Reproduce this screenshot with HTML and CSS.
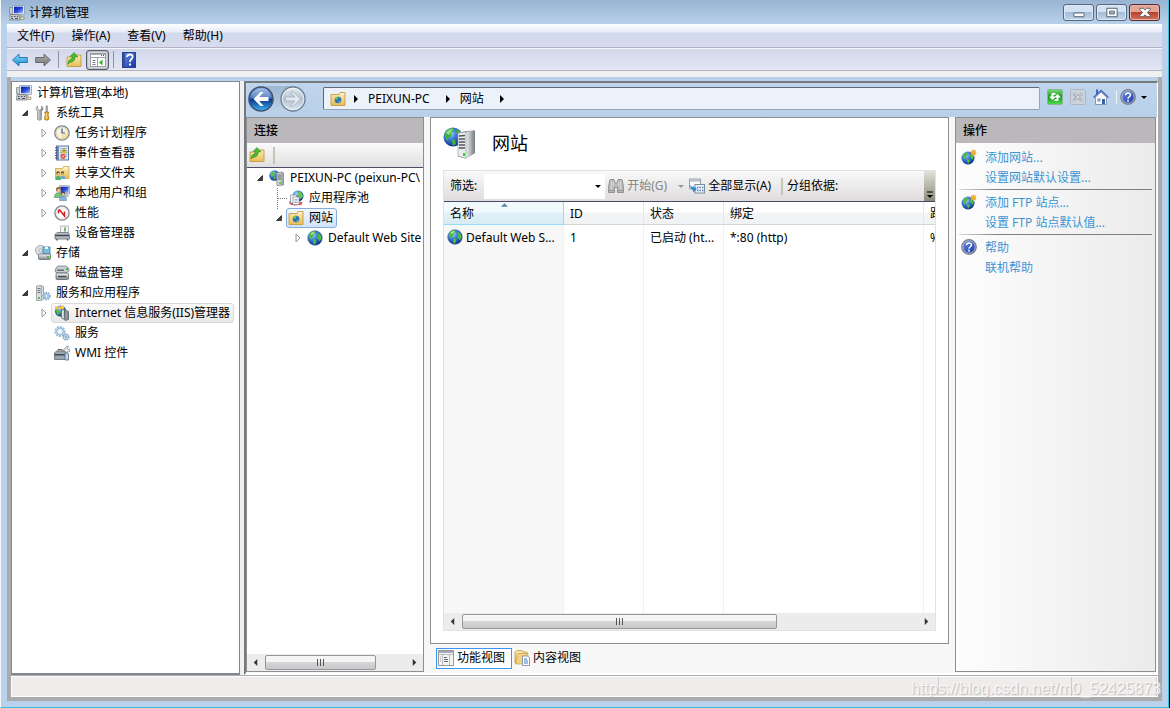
FILE: index.html
```html
<!DOCTYPE html>
<html lang="zh-CN">
<head>
<meta charset="utf-8">
<title>计算机管理</title>
<link rel="stylesheet" href="styles.css">
</head>
<body>
<svg class="sprite" aria-hidden="true">
  <defs>
    <radialGradient id="gGlobe" cx=".35" cy=".3" r=".75"><stop offset="0" stop-color="#b9dcff"/><stop offset=".4" stop-color="#3f7fe0"/><stop offset="1" stop-color="#0a2a86"/></radialGradient>
    <linearGradient id="gFolder" x1="0" y1="0" x2="0" y2="1"><stop offset="0" stop-color="#fdeeb0"/><stop offset="1" stop-color="#e6bd59"/></linearGradient>
    <linearGradient id="gMetal" x1="0" y1="0" x2="0" y2="1"><stop offset="0" stop-color="#f4f5f6"/><stop offset="1" stop-color="#80868c"/></linearGradient>
    <linearGradient id="gMetalH" x1="0" y1="0" x2="1" y2="0"><stop offset="0" stop-color="#f0f2f3"/><stop offset="1" stop-color="#727a80"/></linearGradient>
    <linearGradient id="gScreen" x1="0" y1="0" x2="1" y2="1"><stop offset="0" stop-color="#0a1b9a"/><stop offset=".5" stop-color="#2448d8"/><stop offset="1" stop-color="#a8c4ff"/></linearGradient>
    <linearGradient id="gBack" x1="0" y1="0" x2="0" y2="1"><stop offset="0" stop-color="#8fb2e4"/><stop offset=".48" stop-color="#2e62b4"/><stop offset=".5" stop-color="#0a2f86"/><stop offset="1" stop-color="#38b6f6"/></linearGradient>
    <linearGradient id="gFwd" x1="0" y1="0" x2="0" y2="1"><stop offset="0" stop-color="#e6edf5"/><stop offset=".5" stop-color="#b4c2d2"/><stop offset="1" stop-color="#dde7f1"/></linearGradient>
    <linearGradient id="gArrow" x1="0" y1="0" x2="0" y2="1"><stop offset="0" stop-color="#8fdcfb"/><stop offset="1" stop-color="#1587d0"/></linearGradient>
    <linearGradient id="gArrowG" x1="0" y1="0" x2="0" y2="1"><stop offset="0" stop-color="#b0b0b0"/><stop offset="1" stop-color="#757575"/></linearGradient>
    <linearGradient id="gGreen" x1="0" y1="0" x2="0" y2="1"><stop offset="0" stop-color="#7fd97a"/><stop offset=".5" stop-color="#159a1c"/><stop offset="1" stop-color="#4fe04a"/></linearGradient>
    <linearGradient id="gHelp" x1="0" y1="0" x2="1" y2="1"><stop offset="0" stop-color="#6f93ea"/><stop offset="1" stop-color="#12309c"/></linearGradient>
  </defs>
  <symbol id="globe" viewBox="0 0 16 16"><circle cx="8" cy="8" r="7.3" fill="url(#gGlobe)" stroke="#4a6a9e" stroke-width=".6"/><path d="M2 5Q4 1 7.600 1.100L8.500 3 6.500 4.500 7 6 5 7.500 5.500 9 4 9.500 2 8zM6.500 9.200L9.500 10 9 13 7.200 14.700 5.800 12zM10.500 2.500L13.500 4.800 14.800 8.500 12.500 11.500 11 9 10 7.500 11.200 5.200z" fill="#4cbb45"/><path d="M3.500 3.800Q6 1.500 7.500 2L6.500 3.500 5 5z" fill="#b5f29c"/></symbol>
  <symbol id="computer" viewBox="0 0 16 16"><path d="M.5 2.500h3V9h-3z" fill="#c9ced2" stroke="#84898e" stroke-width=".8"/><rect x="3.500" y=".5" width="12" height="9" rx=".6" fill="#dfe5ee" stroke="#8d99ad" stroke-width=".8"/><rect x="5" y="1.700" width="9" height="6.500" fill="url(#gScreen)"/><path d="M8 9.500h4l1 2H7z" fill="#a9b1b9"/><path d="M1.500 9.500h8l1.500 4v1.500H0V12z" fill="#c3c8cd" stroke="#6d747b" stroke-width=".7"/><path d="M2 11h1.500v1H2zM5 11h1.500v1H5zM8 11h1v1H8zM2 13h2v1H2zM6 13h3v1H6z" fill="#4c545b"/><path d="M11 12h4v2.500h-3z" fill="#e7dfb2" stroke="#8b8257" stroke-width=".6"/></symbol>
  <symbol id="tools" viewBox="0 0 16 16"><path d="M2.500 1v3l2 1.200L6.500 4V1q2 1.500 1.300 3.700L6.500 6.500V14.500q-2 1.500-4 0V6.500L1.200 4.700Q.5 2.500 2.500 1z" fill="url(#gMetalH)" stroke="#868686" stroke-width=".7"/><path d="M11 .8h1.500v6H11z" fill="#b5b5b5" stroke="#777" stroke-width=".5"/><path d="M9.700 7h4l-.7 3 .7 1.500v3q-2 1.500-4 0v-3l.7-1.500z" fill="#efa921" stroke="#9e6c09" stroke-width=".7"/><path d="M11.300 8v6" stroke="#ffe791"/></symbol>
  <symbol id="clock" viewBox="0 0 16 16"><circle cx="8" cy="8" r="7.200" fill="#f7f2dc" stroke="#7c8087" stroke-width="1.300"/><circle cx="8" cy="8" r="5.900" fill="none" stroke="#d8d3bb"/><path d="M8 3.500V8h3" fill="none" stroke="#39599a" stroke-width="1.200"/><path d="M8 8h5v5q-2 2-5 1z" fill="#e9c77b" opacity=".45"/></symbol>
  <symbol id="event" viewBox="0 0 16 16"><rect x="2.500" y="1" width="12" height="14" fill="#dfeaf8" stroke="#5d77a3"/><rect x="3" y="1" width="2" height="14" fill="#7893bb"/><path d="M1 3h3M1 5.500h3M1 8h3M1 10.500h3M1 13h3" stroke="#4d566b"/><path d="M6 3.500h7M6 5.500h7M6 7.500h7M6 9.500h7M6 11.500h7" stroke="#8ba9d2" stroke-width=".8"/><path d="M10 3l3 5H7z" fill="#ffdb3c" stroke="#a58a20" stroke-width=".6"/><path d="M10 5v1.800" stroke="#222" stroke-width=".8"/><circle cx="9" cy="11.500" r="2.500" fill="#e24a40"/><path d="M8 10.500l2 2M10 10.500l-2 2" stroke="#fff" stroke-width=".8"/></symbol>
  <symbol id="share" viewBox="0 0 16 16"><path d="M1.500 3.500h7l1-2h5.500v12H1.500z" fill="url(#gFolder)" stroke="#c9a650" stroke-width=".8"/><path d="M10 2.500h4v1h-4z" fill="#fff"/><circle cx="4" cy="8" r="1.700" fill="#5b4636"/><circle cx="4.200" cy="8.800" r="1.100" fill="#f1c6a0"/><circle cx="8.500" cy="8" r="1.700" fill="#5b4636"/><circle cx="8.500" cy="8.800" r="1.100" fill="#f1c6a0"/><path d="M1.500 15q0-4.500 3-4.200Q7 11 7 15z" fill="#4ab274"/><path d="M6.500 14q0-3.500 2.500-3.200 2.500.3 2.500 3.200z" fill="#6aa9d4"/></symbol>
  <symbol id="users" viewBox="0 0 16 16"><rect x="5.500" y=".8" width="10" height="8" fill="#dfe6f0" stroke="#8d9bb0" stroke-width=".8"/><rect x="6.500" y="1.800" width="8" height="6" fill="url(#gScreen)"/><path d="M9 9h5l1 3H9z" fill="#b9c2cc"/><circle cx="4.500" cy="4.500" r="2.500" fill="#8a6238"/><circle cx="4.800" cy="5.500" r="1.700" fill="#edc39b"/><path d="M.5 12.500q0-5 4-4.800 3.500.3 3.500 4.800z" fill="#7cc27c" stroke="#3b7d43" stroke-width=".5"/><circle cx="9" cy="8.500" r="2.100" fill="#5d4838"/><circle cx="9.100" cy="9.300" r="1.400" fill="#edc39b"/><path d="M5.500 15.500q0-4.400 3.500-4.400t3.500 4.400z" fill="#8ab4de" stroke="#4a729c" stroke-width=".5"/></symbol>
  <symbol id="perf" viewBox="0 0 16 16"><circle cx="8" cy="8" r="7.100" fill="#fff" stroke="#85898e" stroke-width="1.400"/><circle cx="8" cy="8" r="5.500" fill="#fff" stroke="#d9dcdf" stroke-width=".8"/><path d="M4.500 8.500V5.500L5.700 5 10.500 11V6.500" fill="none" stroke="#d42121" stroke-width="1.500"/></symbol>
  <symbol id="device" viewBox="0 0 16 16"><path d="M6.500 1h8v8h-8z" fill="#f3f5f6" stroke="#a3abb1" stroke-width=".8"/><path d="M10 2.500h2v4h-2z" fill="#7fae76"/><path d="M1 9.500L3 7.500h11l1.500 2V14H1z" fill="#b5bbc1" stroke="#6b737a" stroke-width=".8"/><path d="M1 10.500h14" stroke="#3d4a5a" stroke-width="1.500"/><path d="M3 14v1.500M13.500 14v1.500" stroke="#555" stroke-width="1.500"/></symbol>
  <symbol id="storage" viewBox="0 0 16 16"><circle cx="5.500" cy="5.500" r="5" fill="#dfe2e4" stroke="#8e959b" stroke-width=".8"/><circle cx="5.500" cy="5.500" r="1.500" fill="#fff" stroke="#888" stroke-width=".7"/><path d="M8 2h7v7H8z" fill="#78bde4" stroke="#3f7ba5" stroke-width=".8"/><path d="M10 2h3v2h-3z" fill="#fff"/><rect x="3.500" y="9" width="12" height="5.500" rx="1" fill="url(#gMetal)" stroke="#666e75" stroke-width=".8"/><rect x="12" y="11" width="2" height="2" fill="#3ac22a"/></symbol>
  <symbol id="disk" viewBox="0 0 16 16"><path d="M2 3l2-2h8l3 2.500V6l-3 2H3L1 6.500z" fill="#c8cccf" stroke="#757c83" stroke-width=".8"/><path d="M3 4.500h7v1.500H3z" fill="#656d74"/><rect x="2" y="8" width="12.500" height="6.500" rx="1" fill="url(#gMetal)" stroke="#61686e" stroke-width=".8"/><path d="M4 11.500h8.500" stroke="#444" stroke-width="1.300"/><path d="M12 3h2v2h-2z" fill="#38bd34"/></symbol>
  <symbol id="srvgear" viewBox="0 0 16 16"><path d="M1.500 1l5-.5 2 1V14l-2 1.500h-5z" fill="#d9dee2" stroke="#8b949b" stroke-width=".8"/><path d="M6.500 1v14" stroke="#9aa3aa" stroke-width=".8"/><path d="M2.500 3.500h3M2.500 5.500h3M2.500 7.500h3" stroke="#6d767d"/><path d="M3 12h2v2H3z" fill="#50c244"/><circle cx="11.500" cy="11" r="3.200" fill="#eaf4fd" stroke="#7ba6ca" stroke-width="2" stroke-dasharray="1.500 .8"/><circle cx="11.500" cy="11" r="1.600" fill="#fff" stroke="#7faacd"/></symbol>
  <symbol id="iis" viewBox="0 0 16 16"><circle cx="6.500" cy="6" r="5.600" fill="url(#gGlobe)"/><path d="M1.500 5L4 4l2 3-2 4zM6 6l4 1-3 4z" fill="#55b846"/><path d="M1 1l4.500 1.500L1.500 5zM5 1.500L10 .5v3.500L6 4z" fill="#ffc231"/><path d="M7.500 5l3-1v10.500l-3-1.500zM11 5l3.500 1.500v8L11 15.500z" fill="url(#gMetalH)" stroke="#57676e" stroke-width=".8"/></symbol>
  <symbol id="gears" viewBox="0 0 16 16"><circle cx="6" cy="6.500" r="4.600" fill="#eaf5fd" stroke="#9bbcd5" stroke-width="2" stroke-dasharray="2 1"/><circle cx="6" cy="6.500" r="3.500" fill="#dcedf8" stroke="#8eb3cf"/><circle cx="6" cy="6.500" r="1.300" fill="#fff"/><circle cx="12" cy="12" r="2.800" fill="#d8eaf7" stroke="#76a1c2" stroke-width="1.500" stroke-dasharray="1.500 .7"/><circle cx="12" cy="12" r="1" fill="#fff" stroke="#77a2c1"/></symbol>
  <symbol id="wmi" viewBox="0 0 16 16"><path d="M9 5.500l3.500-4 2-.5-1 2.500 1 1L16 4l-.5 2.500-3 1z" fill="#dfe3e6" stroke="#788086" stroke-width=".7"/><path d="M.5 8l2-2h8l1 2v6.500H.5z" fill="#9aa6b2" stroke="#626a71" stroke-width=".8"/><path d="M.5 9h11v1.500H.5z" fill="#424b56"/><path d="M4 6V4.500h4V6" fill="none" stroke="#666"/><path d="M11 8h2.500l1 1v6h-3.500z" fill="#c3d5e4" stroke="#4a6f8c" stroke-width=".8"/></symbol>
  <symbol id="folderup" viewBox="0 0 16 16"><path d="M1 5h7l1.500-2H15v11.500H1z" fill="url(#gFolder)" stroke="#bf9b43" stroke-width=".9"/><path d="M2 12Q2 7.500 6 6.500V4L4 4.500 8 .500 12 5l-2.500-.5Q9 10 4 10.500 2.500 11 2 12z" fill="#4cbc32" stroke="#237a1b" stroke-width=".5"/></symbol>
  <symbol id="left" viewBox="0 0 16 16"><path d="M.600 8L7 2v3.500h8.300v5H7V14z" fill="url(#gArrow)" stroke="#1b6fb2" stroke-width=".9"/></symbol>
  <symbol id="right" viewBox="0 0 16 16"><path d="M15.400 8L9 2v3.500H.7v5H9V14z" fill="url(#gArrowG)" stroke="#606060" stroke-width=".9"/></symbol>
  <symbol id="panel" viewBox="0 0 16 16"><rect x=".5" y="1.500" width="15" height="13" fill="#fff" stroke="#9a9da3"/><path d="M1 2.500h14" stroke="#a9adb5"/><path d="M1 5.500h14M7.500 6v8.500" stroke="#9a9fa8"/><path d="M11 3.500h1M13 3.500h1" stroke="#555"/><path d="M2.500 8.500h3M2.500 10.500h3M2.500 12.500h3" stroke="#7a808a"/><path d="M12.500 7.500v6L9 10.500z" fill="#2fae2f"/></symbol>
  <symbol id="helpbook" viewBox="0 0 14 16"><rect x=".5" y=".5" width="13" height="15" fill="url(#gHelp)" stroke="#27438f"/><path d="M1 1h2v14H1z" fill="#3251ab"/><path d="M5 5q.3-2.500 3-2.500T10.600 5Q10.500 6.500 9 7.500 8 8.200 8 10" fill="none" stroke="#fff" stroke-width="1.800"/><rect x="7" y="11.500" width="2" height="2" fill="#fff"/></symbol>
  <symbol id="navback" viewBox="0 0 26 26"><circle cx="13" cy="13" r="12" fill="url(#gBack)" stroke="#42516c" stroke-width="1.500"/><path d="M2.500 11Q5 3 13 2.500T23.500 11Q13 14 2.500 11z" fill="#fff" opacity=".22"/><path d="M5.500 13l7-7h3.200l-4.500 5H20.500v4h-9.300l4.500 5h-3.200z" fill="#fff"/></symbol>
  <symbol id="navfwd" viewBox="0 0 26 26"><circle cx="13" cy="13" r="12" fill="url(#gFwd)" stroke="#6d7e92" stroke-width="1.300"/><circle cx="13" cy="13" r="10.800" fill="none" stroke="#f4f8fc" opacity=".8"/><path d="M20.500 13l-7-7h-3.200l4.500 5H5.500v4h9.300l-4.500 5h3.200z" fill="#e4eaf0" stroke="#a1adba" stroke-width=".8"/></symbol>
  <symbol id="sitefolder" viewBox="0 0 16 16"><path d="M1 3.500h8l1-2h5v13H1z" fill="url(#gFolder)" stroke="#c49c45" stroke-width=".9"/><path d="M10 2.500h4v1h-4z" fill="#fff"/><circle cx="8" cy="9" r="3.300" fill="#2d70be"/><path d="M5 7.500q2-2.500 3.500-2L8 8l-2 1zM8 10h2.500l-1 2.200z" fill="#64c853"/></symbol>
  <symbol id="apppool" viewBox="0 0 16 16"><circle cx="10" cy="6" r="5.500" fill="url(#gGlobe)"/><path d="M10 1l4 2 1 4-3 2-2-4z" fill="#64c853"/><path d="M1 11.500q-.5 3.500 5 4L13.500 15l1-3z" fill="#e0574b"/><path d="M2.500 5h6v8h-6z" fill="#f3f5f8" stroke="#8b94a1" stroke-width=".8"/><path d="M5 7h6v7.500H5z" fill="#fff" stroke="#8b94a1" stroke-width=".8"/><path d="M6.500 9.500h3M6.500 11h3M6.500 12.500h3" stroke="#7f91ae" stroke-width=".8"/></symbol>
  <symbol id="srvglobe" viewBox="0 0 16 16"><circle cx="5.500" cy="5.500" r="5.200" fill="url(#gGlobe)"/><path d="M1 3.500L5 .7 6 4 3 7zM5 6.500l2 1-2 3z" fill="#58c04b"/><path d="M7.500 3L13 2l1.500 1v12L8 15.500z" fill="#d0d6da" stroke="#78838a" stroke-width=".8"/><path d="M13 2.500V15" stroke="#77828a"/><path d="M8.500 5H12M8.500 7H12M8.500 9H12" stroke="#59626a"/><path d="M10 12h2v2h-2z" fill="#4fd944"/></symbol>
  <symbol id="bigserver" viewBox="0 0 32 32"><circle cx="10" cy="10" r="9.500" fill="url(#gGlobe)"/><path d="M1.500 7Q4 1 10 1l1 3-3 2 .5 3-3 2-1 3-2-2zM8 12l4 1 1 4-3 2zM14 2q5 3 5 8l-4-1-2-4z" fill="#3fae3c"/><path d="M3 6q3-4.500 7-4L6 8z" fill="#a7ed8e" opacity=".8"/><path d="M15 6l8-2 9-.5V26l-9 5.500-8-2z" fill="#8a9297"/><path d="M23 5l9-1.500V26l-9 5.500z" fill="url(#gMetalH)"/><path d="M15 6l8-1v26.500l-8-2.500z" fill="#e9ecee" stroke="#879097" stroke-width=".6"/><path d="M16 9l6-.5M16 12h6M16 15h6M16 18h6M16 21h6" stroke="#4c565c" stroke-width="1.300"/><path d="M20 26h2v3h-2z" fill="#37cd36"/></symbol>
  <symbol id="binoc" viewBox="0 0 16 16"><path d="M2 1.500h4l1 3.500h2l1-3.500h4l1.500 7v6H9.500v-5h-3v5H.5v-6z" fill="#b9b9b9" stroke="#939393"/><path d="M3.500 3v10M12.500 3v10M5.500 4v4M10.500 4v4" stroke="#dadada"/><path d="M1 12.500h5M10 12.500h5" stroke="#969696"/></symbol>
  <symbol id="showall" viewBox="0 0 16 16"><path d="M.5 1h11v10H.5z" fill="#f8f9fa" stroke="#98a0a8"/><path d="M1 2.500h10" stroke="#b4bdc5" stroke-width="2"/><rect x="6" y="6.500" width="9.500" height="8.500" fill="#eff4f8" stroke="#76909f"/><path d="M8 9.500h1.500M10.500 9.500H12M13 9.500h1.500M8 12.500h1.500M10.500 12.500H12M13 12.500h1.500" stroke="#5c7bb0" stroke-width="1.300"/><path d="M1 7l1 4 2 1v2.500l4-3.500-4-3V9.500z" fill="#258dd8"/></symbol>
  <symbol id="refresh" viewBox="0 0 16 16"><rect x=".5" y=".5" width="15" height="15" rx="1" fill="url(#gGreen)" stroke="#8ab49a"/><path d="M4.500 4h4v1.800H6.500V7.500H9L5.500 11 2 7.500h2.500zM11.500 12h-4v-1.800h2V8.500H7L10.500 5 14 8.500h-2.500z" fill="#fff"/></symbol>
  <symbol id="stop" viewBox="0 0 16 16"><rect x=".5" y=".5" width="15" height="15" rx="1" fill="#cad2db" stroke="#aeb7c1"/><path d="M3.500 4.500l8.500 7M12 4.500l-8.500 7" stroke="#9ba4ad" stroke-width="2.500"/><path d="M4 4.500l8 7M12 4.500l-8 7" stroke="#e2e6ea"/></symbol>
  <symbol id="home" viewBox="0 0 16 16"><path d="M2.500 8L8 3l5.500 5v7.500h-11z" fill="#f5f7fa" stroke="#7c8494" stroke-width=".8"/><path d="M.5 8.500L8 1.500l7.500 7" fill="none" stroke="#4d66c6" stroke-width="1.500"/><path d="M3 .5h2v4L3 6z" fill="#4261ca"/><path d="M9 10h3v5H9z" fill="#3464ad"/><path d="M4.500 9.500h3v3h-3z" fill="#8a97a8"/></symbol>
  <symbol id="help" viewBox="0 0 16 16"><circle cx="8" cy="8" r="7.200" fill="url(#gHelp)" stroke="#7d8188" stroke-width="1.400"/><circle cx="8" cy="8" r="6.100" fill="none" stroke="#dbe2f1" stroke-width=".6"/><path d="M5.500 6.200Q5.700 4 8 4t2.500 2Q10.500 7 9.200 7.800 8 8.500 8 9.800" fill="none" stroke="#fff" stroke-width="1.500"/><rect x="7.200" y="10.800" width="1.700" height="1.700" fill="#fff"/></symbol>
  <symbol id="features" viewBox="0 0 16 16"><rect x=".5" y=".5" width="15" height="15" fill="#f5f5f3" stroke="#96999d"/><path d="M1 2h14" stroke="#a3a8ba" stroke-width="2"/><path d="M1 4.500h14M4.500 4v11M11.500 4v11" stroke="#b9bbbd"/><path d="M6 7.500h3M6 9.500h4M6 11.500h4" stroke="#626a78"/><path d="M2 7h1M2 9h1M2 11h1" stroke="#a9a58e"/></symbol>
  <symbol id="content" viewBox="0 0 16 16"><path d="M1 2l2-1.500h5L9 2h4v11H1z" fill="url(#gFolder)" stroke="#bd9744" stroke-width=".8"/><path d="M3 5l1-1.500h10v8L11 14H2z" fill="#f2d281" stroke="#c4a04e" stroke-width=".7"/><path d="M8.500 6h5L15.500 8v7.500h-7z" fill="#fff" stroke="#73849c" stroke-width=".8"/><path d="M10 9h3M10 11h4M10 13h4" stroke="#407ac7"/></symbol>
  <symbol id="globestar" viewBox="0 0 16 16"><circle cx="7" cy="9" r="6.500" fill="url(#gGlobe)"/><path d="M1.500 6.500Q3 3.500 6.500 3.200L7 6 4 8.500 5 10 3 10.500zM5.500 10l4 1-2.500 4zM9.500 5l3.500 2-1 4-3-3z" fill="#51ba43"/><path d="M12.500 0l.8 1.800 2-.8-.8 2 1.500.8-1.600.8.900 2-2-.8-.8 1.700-.8-1.700-2 .8.800-2L9 3.800 10.500 3l-.8-2 2 .8z" fill="#f5aa2b"/></symbol>
  <symbol id="tri" viewBox="0 0 8 8"><path d="M2 0l4 4-4 4z"/></symbol>
  <symbol id="trileft" viewBox="0 0 8 8"><path d="M6 0L2 4l4 4z"/></symbol>
  <symbol id="tridown" viewBox="0 0 8 8"><path d="M1 3h6L4 6z"/></symbol>
  <symbol id="open" viewBox="0 0 8 8"><path d="M6.500 1.500v5h-5z" fill="#404040" stroke="#222" stroke-width=".8"/></symbol>
  <symbol id="closed" viewBox="0 0 8 10"><path d="M2 1l4 4-4 4z" fill="#fff" stroke="#989898"/></symbol>
</svg>

<div class="window">
  <header class="titlebar">
    <svg class="icon"><use href="#computer"/></svg>
    <span class="caption">计算机管理</span>
    <div class="winbtns">
      <button class="winbtn" aria-label="最小化"><svg viewBox="0 0 29 16"><rect x="9.500" y="8.500" width="11" height="4" rx=".5" fill="#fff" stroke="#4d5969"/></svg></button>
      <button class="winbtn" aria-label="最大化"><svg viewBox="0 0 29 16"><path d="M9.500 3.500h11v9h-11zM12.500 6.500v3h5v-3z" fill="#fff" stroke="#4d5969" fill-rule="evenodd"/></svg></button>
      <button class="winbtn close" aria-label="关闭"><svg viewBox="0 0 29 16"><path d="M9.500 3.500h3.500l2 2 2-2h3.500v1.500L17.500 8l3 3v1.500H17l-2-2-2 2H9.500V11l3-3-3-3z" fill="#fff" stroke="#4d4b5c" stroke-width=".9"/></svg></button>
    </div>
  </header>

  <div class="client">
    <nav class="menubar">
      <button>文件(F)</button><button>操作(A)</button><button>查看(V)</button><button>帮助(H)</button>
    </nav>
    <div class="toolbar">
      <button aria-label="后退"><svg class="icon"><use href="#left"/></svg></button>
      <button aria-label="前进"><svg class="icon"><use href="#right"/></svg></button>
      <span class="sep"></span>
      <button aria-label="上一级"><svg class="icon"><use href="#folderup"/></svg></button>
      <button class="pressed" aria-label="显示操作窗格"><svg class="icon"><use href="#panel"/></svg></button>
      <span class="sep"></span>
      <button aria-label="帮助"><svg class="icon"><use href="#helpbook"/></svg></button>
    </div>
    <div class="strip"></div>

    <div class="frame">
      <div class="panes">
        <aside class="tree-pane">
          <ul class="tree">
            <li><span class="node"><svg class="icon"><use href="#computer"/></svg>计算机管理(本地)</span>
              <ul class="first">
                <li><button class="exp" aria-label="折叠"><svg><use href="#open"/></svg></button><span class="node"><svg class="icon"><use href="#tools"/></svg>系统工具</span>
                  <ul>
                    <li><button class="exp" aria-label="展开"><svg><use href="#closed"/></svg></button><span class="node"><svg class="icon"><use href="#clock"/></svg>任务计划程序</span></li>
                    <li><button class="exp" aria-label="展开"><svg><use href="#closed"/></svg></button><span class="node"><svg class="icon"><use href="#event"/></svg>事件查看器</span></li>
                    <li><button class="exp" aria-label="展开"><svg><use href="#closed"/></svg></button><span class="node"><svg class="icon"><use href="#share"/></svg>共享文件夹</span></li>
                    <li><button class="exp" aria-label="展开"><svg><use href="#closed"/></svg></button><span class="node"><svg class="icon"><use href="#users"/></svg>本地用户和组</span></li>
                    <li><button class="exp" aria-label="展开"><svg><use href="#closed"/></svg></button><span class="node"><svg class="icon"><use href="#perf"/></svg>性能</span></li>
                    <li><span class="exp"></span><span class="node"><svg class="icon"><use href="#device"/></svg>设备管理器</span></li>
                  </ul></li>
                <li><button class="exp" aria-label="折叠"><svg><use href="#open"/></svg></button><span class="node"><svg class="icon"><use href="#storage"/></svg>存储</span>
                  <ul>
                    <li><span class="exp"></span><span class="node"><svg class="icon"><use href="#disk"/></svg>磁盘管理</span></li>
                  </ul></li>
                <li><button class="exp" aria-label="折叠"><svg><use href="#open"/></svg></button><span class="node"><svg class="icon"><use href="#srvgear"/></svg>服务和应用程序</span>
                  <ul>
                    <li><button class="exp" aria-label="展开"><svg><use href="#closed"/></svg></button><span class="node inactive"><svg class="icon"><use href="#iis"/></svg>Internet 信息服务(IIS)管理器</span></li>
                    <li><span class="exp"></span><span class="node"><svg class="icon"><use href="#gears"/></svg>服务</span></li>
                    <li><span class="exp"></span><span class="node"><svg class="icon"><use href="#wmi"/></svg>WMI 控件</span></li>
                  </ul></li>
              </ul></li>
          </ul>
        </aside>

        <main class="iis">
          <div class="navbar">
            <div class="navbtns">
              <button aria-label="后退"><svg><use href="#navback"/></svg></button>
              <button aria-label="前进"><svg><use href="#navfwd"/></svg></button>
            </div>
            <div class="address">
              <svg class="icon"><use href="#sitefolder"/></svg>
              <svg class="tri"><use href="#tri"/></svg><span>PEIXUN-PC</span>
              <svg class="tri"><use href="#tri"/></svg><span>网站</span>
              <svg class="tri"><use href="#tri"/></svg>
            </div>
            <div class="navtools">
              <button aria-label="刷新"><svg class="icon"><use href="#refresh"/></svg></button>
              <button aria-label="停止"><svg class="icon"><use href="#stop"/></svg></button>
              <button aria-label="主页"><svg class="icon"><use href="#home"/></svg></button>
              <span class="navsep"></span>
              <button aria-label="帮助"><svg class="icon"><use href="#help"/></svg><svg class="tri"><use href="#tridown"/></svg></button>
            </div>
          </div>

          <div class="body">
            <section class="connections">
              <h2>连接</h2>
              <div class="conn-tools"><button aria-label="上一级"><svg class="icon"><use href="#folderup"/></svg></button><span class="beige"></span></div>
              <ul class="tree conn-tree">
                <li><button class="exp" aria-label="折叠"><svg><use href="#open"/></svg></button><span class="node"><svg class="icon"><use href="#srvglobe"/></svg>PEIXUN-PC (peixun-PC\</span>
                  <ul class="lined">
                    <li class="leaf"><span class="exp"></span><span class="node"><svg class="icon"><use href="#apppool"/></svg>应用程序池</span></li>
                    <li><button class="exp" aria-label="折叠"><svg><use href="#open"/></svg></button><span class="node selected"><svg class="icon"><use href="#sitefolder"/></svg>网站</span>
                      <ul>
                        <li><button class="exp" aria-label="展开"><svg><use href="#closed"/></svg></button><span class="node"><svg class="icon"><use href="#globe"/></svg>Default Web Site</span></li>
                      </ul></li>
                  </ul></li>
              </ul>
              <div class="scrollbar">
                <button aria-label="向左滚动"><svg><use href="#trileft"/></svg></button>
                <div class="track"><div class="thumb conn-thumb"><i></i><i></i><i></i></div></div>
                <button aria-label="向右滚动"><svg><use href="#tri"/></svg></button>
              </div>
            </section>

            <div class="center">
              <section class="content">
                <h1><svg><use href="#bigserver"/></svg>网站</h1>
                <div class="list">
                  <div class="filterbar">
                    <label for="filter">筛选:</label>
                    <div class="combo"><select id="filter"><option></option></select><svg class="tri"><use href="#tridown"/></svg></div>
                    <button class="go" disabled><svg class="icon"><use href="#binoc"/></svg>开始(G)<svg class="tri"><use href="#tridown"/></svg></button>
                    <button class="all"><svg class="icon"><use href="#showall"/></svg>全部显示(A)</button>
                    <span class="beige"></span>
                    <span class="group">分组依据:</span>
                    <button class="more" aria-label="更多"><svg viewBox="0 0 8 8"><path d="M1 1h6" stroke="#000"/><path d="M1 4h6L4 7z"/></svg></button>
                  </div>
                  <div class="tablewrap">
                    <table>
                      <colgroup><col class="c-name"><col class="c-id"><col class="c-state"><col class="c-bind"><col></colgroup>
                      <thead><tr><th class="sorted">名称<svg viewBox="0 0 8 4"><path d="M0 4l4-4 4 4z" fill="#4b87a8"/></svg></th><th>ID</th><th>状态</th><th>绑定</th><th>路</th></tr></thead>
                      <tbody>
                        <tr><td class="site"><svg class="icon"><use href="#globe"/></svg>Default Web S...</td><td>1</td><td>已启动 (ht...</td><td>*:80 (http)</td><td>%</td></tr>
                        <tr class="fill"><td></td><td></td><td></td><td></td><td></td></tr>
                      </tbody>
                    </table>
                  </div>
                  <div class="scrollbar">
                    <button aria-label="向左滚动"><svg><use href="#trileft"/></svg></button>
                    <div class="track"><div class="thumb list-thumb"><i></i><i></i><i></i></div></div>
                    <button aria-label="向右滚动"><svg><use href="#tri"/></svg></button>
                  </div>
                </div>
              </section>
              <div class="views">
                <button class="active"><svg class="icon"><use href="#features"/></svg>功能视图</button>
                <button><svg class="icon"><use href="#content"/></svg>内容视图</button>
              </div>
            </div>

            <section class="actions">
              <h2>操作</h2>
              <div class="group-links"><svg class="icon"><use href="#globestar"/></svg><a href="#add-site">添加网站...</a><a href="#site-defaults">设置网站默认设置...</a></div>
              <div class="group-links"><svg class="icon"><use href="#globestar"/></svg><a href="#add-ftp">添加 FTP 站点...</a><a href="#ftp-defaults">设置 FTP 站点默认值...</a></div>
              <div class="group-links"><svg class="icon"><use href="#help"/></svg><a href="#help-topics">帮助</a><a href="#online-help">联机帮助</a></div>
            </section>
          </div>
        </main>
      </div>
      <footer class="status"><span class="s-main"></span><span class="s-mid"></span><span class="s-end"></span></footer>
    </div>
  </div>
  <div class="watermark">https://blog.csdn.net/m0_52425873</div>
</div>
</body>
</html>
```

FILE: styles.css
```css
* { box-sizing: border-box; }
html, body { height: 100%; }
body {
  margin: 0;
  background: #000;
  color: #000;
  font: 12px/20px "Noto Sans", "Noto Sans CJK SC", sans-serif;
  overflow: hidden;
}
button {
  margin: 0;
  padding: 0;
  border: 0;
  background: none;
  color: inherit;
  font: inherit;
  display: flex;
  align-items: center;
}
ul { list-style: none; margin: 0; padding: 0; }
h1, h2 { margin: 0; }
svg { display: block; flex: none; }
.sprite { position: absolute; width: 0; height: 0; }
.icon { width: 16px; height: 16px; }
.tri { width: 8px; height: 8px; }

/* window chrome */
.window {
  position: relative;
  display: flex;
  flex-direction: column;
  height: 100%;
  margin-right: 1px;
  padding: 0 6px 6px;
  border-left: 1px solid #f4f8fc;
  border-right: 1px solid #35c3e0;
  border-bottom: 1px solid #35bfdc;
  background: linear-gradient(#98b4d2, #b9d1ea 24px);
}
.titlebar { display: flex; align-items: center; height: 24px; padding: 1px 0 0 2px; }
.caption { margin-left: 4px; }
.winbtns { display: flex; gap: 2px; margin-left: auto; padding-right: 2px; }
.winbtn {
  width: 31px;
  height: 17px;
  border: 1px solid #56677e;
  border-radius: 3px;
  background: linear-gradient(#d3e2f2 45%, #a4bdd8 50%, #c0d6ec);
  box-shadow: inset 0 0 0 1px #dfeaf5;
}
.winbtn svg { width: 29px; height: 15px; }
.winbtn.close {
  border-color: #5b2a2e;
  background: linear-gradient(#e3a596 45%, #bc3f2c 50%, #d2765c);
  box-shadow: inset 0 0 0 1px #e6b5aa;
}
.client { display: flex; flex-direction: column; flex: 1; min-height: 0; }
.menubar {
  display: flex;
  align-items: center;
  gap: 17px;
  height: 24px;
  padding-left: 10px;
  border-bottom: 1px solid #b3b3c3;
  background: linear-gradient(#fff, #e8ecf7 8px, #d4daed 9px, #d6dcee);
}
.toolbar {
  display: flex;
  align-items: center;
  height: 23px;
  padding-left: 5px;
  gap: 7px;
  border-top: 1px solid #f5f6fb;
  border-bottom: 1px solid #b3b3c3;
  background: linear-gradient(#d2d8eb, #e2e6f5);
}
.sep { width: 1px; height: 17px; background: #8e919c; }
.toolbar .pressed {
  justify-content: center;
  width: 23px;
  height: 20px;
  margin: 0 -3px;
  border: 1px solid #565b65;
  border-radius: 3px;
  background: #d9dce5;
  box-shadow: inset 0 0 2px #777;
}
.strip { height: 6px; background: #f0f0f0; }
.frame {
  display: flex;
  flex-direction: column;
  flex: 1;
  min-height: 0;
  padding: 0 4px 4px;
  background: #ababab;
}
.panes {
  display: flex;
  flex: 1;
  min-height: 0;
  border-top: 4px solid #b9d1ea;
  background: #f0f0f0;
}

/* trees */
.tree-pane { flex: none; width: 229px; border: 1px solid #828790; border-bottom-width: 2px; background: #fff; }
.tree-pane .tree { padding: 1px 0 0 1px; }
.tree ul { padding-left: 19px; }
.tree ul.first { padding-left: 6px; }
.tree li { position: relative; white-space: nowrap; }
.exp { display: inline-flex; vertical-align: top; justify-content: center; width: 13px; height: 20px; }
.exp svg { width: 8px; height: 10px; margin-right: 1px; }
.node {
  display: inline-flex;
  vertical-align: top;
  align-items: center;
  gap: 5px;
  height: 20px;
  padding: 0 3px 0 2px;
  border: 1px solid transparent;
  border-radius: 3px;
}
.inactive { border-color: #d9d9d9; background: linear-gradient(#fafafa, #e8e8e8); }
.selected { border-color: #84acdd; background: linear-gradient(#f2f8fe, #cfe3fb); }

/* management pane */
.iis {
  display: flex;
  flex-direction: column;
  flex: 1;
  min-width: 0;
  margin-left: 4px;
  border: 2px solid #76797e;
  border-right: 1px solid #fff;
  border-bottom: 2px solid #fff;
  background: #f7f7f7;
}
.navbar {
  display: flex;
  align-items: center;
  height: 34px;
  padding-bottom: 3px;
  background: linear-gradient(#c0d5ec, #b8d0ea);
}
.navbtns {
  display: flex;
  gap: 6px;
  margin-left: 2px;
  border-radius: 14px;
  background: linear-gradient(#9fb6d1, #bdd2e9);
}
.navbtns svg { width: 26px; height: 26px; }
.address {
  display: flex;
  align-items: center;
  flex: 1;
  height: 23px;
  margin-left: 17px;
  padding-left: 6px;
  border: 1px solid #5b6876;
  border-right-color: #98a4b1;
  border-bottom-color: #98a4b1;
  border-radius: 2px;
  background: #ebf2fa;
}
.address .tri { margin-left: 6px; margin-right: 8px; }
.address span + .tri { margin: 0 8px 0 14px; }
.navtools { display: flex; align-items: center; gap: 7px; padding: 0 9px 3px 7px; }
.navtools button:last-child { gap: 4px; margin-left: -4px; }
.navsep { width: 1px; height: 13px; background: #f3f4f5; }
.body { display: flex; flex: 1; min-height: 0; padding: 0 1px 1px 0; }
h2 {
  flex: none;
  height: 25px;
  padding-left: 7px;
  font-size: 12px;
  line-height: 26px;
  font-weight: 500;
  background: #bab8ba;
}
.connections { display: flex; flex-direction: column; width: 178px; border: 1px solid #8c8e90; background: #fff; overflow: hidden; }
.conn-tools {
  display: flex;
  align-items: center;
  gap: 8px;
  flex: none;
  height: 25px;
  padding-left: 2px;
  border-bottom: 1px solid #4a4a66;
  background: linear-gradient(#fafafa, #e2dfe1);
}
.beige { width: 2px; height: 17px; background: #c6c6b6; }
.conn-tree { flex: 1; min-height: 0; padding-left: 7px; overflow: hidden; }
.conn-tree .node { gap: 5px; padding-left: 1px; }
.lined::before {
  content: "";
  position: absolute;
  left: 23px;
  top: 20px;
  height: 21px;
  border-left: 1px dotted #777;
}
.leaf::before {
  content: "";
  position: absolute;
  left: 5px;
  top: 10px;
  width: 9px;
  border-top: 1px dotted #777;
}
.scrollbar { display: flex; flex: none; height: 17px; background: #ececec; }
.scrollbar button { justify-content: center; width: 17px; }
.scrollbar svg { width: 7px; height: 7px; fill: #333; }
.track { flex: 1; padding: 1px 0; }
.thumb {
  display: flex;
  align-items: center;
  justify-content: center;
  gap: 2px;
  height: 15px;
  border: 1px solid #959799;
  border-radius: 2px;
  background: linear-gradient(#f5f5f5 45%, #d6d6d8 50%, #c8c8ca);
}
.thumb i { width: 1px; height: 7px; background: #555; }
.conn-thumb { width: 78%; margin-left: 1px; }
.list-thumb { width: 69%; margin-left: 1px; }

.center { display: flex; flex-direction: column; flex: 1; min-width: 0; margin: 0 6px; }
.content {
  display: flex;
  flex-direction: column;
  flex: 1;
  min-height: 0;
  padding: 8px 12px 12px;
  border: 1px solid #8c8e90;
  background: #fff;
}
h1 { display: flex; align-items: center; gap: 17px; height: 34px; font-size: 18px; line-height: 32px; font-weight: 400; }
h1 svg { width: 32px; height: 34px; }
.list { display: flex; flex-direction: column; flex: 1; min-height: 0; margin-top: 10px; border: 1px solid #e2e2e2; }
.filterbar {
  display: flex;
  align-items: center;
  flex: none;
  height: 31px;
  padding-left: 6px;
  border-bottom: 1px solid #4a4a66;
  background: linear-gradient(#f9f9f9, #dfdcde);
  white-space: nowrap;
}
.combo { display: flex; align-items: center; width: 121px; height: 25px; margin-left: 7px; padding-right: 3px; background: #fff; }
.combo select { appearance: none; flex: 1; min-width: 0; height: 25px; border: 0; background: #fff; font: inherit; }
.go { gap: 3px; margin-left: 3px; color: #858585; }
.go .tri { margin-left: 7px; fill: #999; }
.all { gap: 3px; margin-left: 4px; }
.filterbar .beige { margin: 0 4px 0 10px; }
.more {
  align-items: flex-end;
  justify-content: center;
  width: 11px;
  height: 30px;
  margin-left: auto;
  padding-bottom: 2px;
  background: linear-gradient(#e2e1da, #8c8b7a);
}
.more svg { width: 8px; height: 8px; }
.tablewrap { flex: 1; min-height: 0; overflow: hidden; }
table { width: 100%; height: 100%; border-collapse: separate; border-spacing: 0; table-layout: fixed; }
.c-name { width: 120px; }
.c-id, .c-state { width: 80px; }
.c-bind { width: 200px; }
th, td { padding: 1px 0 0 6px; border-right: 1px solid #e9f1fa; text-align: left; white-space: nowrap; overflow: hidden; font-weight: 400; }
th {
  position: relative;
  height: 23px;
  border-bottom: 1px solid #d5d5d5;
  border-right-color: #e3e8ee;
  background: linear-gradient(#fff 45%, #f3f4f6 50%, #f1f2f4);
}
th.sorted { border-right-color: #96d9f9; border-bottom-color: #96d9f9; background: linear-gradient(#f2f9fc 45%, #e0f1f8 50%, #d8ecf6); }
th.sorted svg { position: absolute; left: 57px; top: 1px; width: 7px; height: 4px; }
td { height: 24px; }
td:first-child { background: #f7f7f7; }
td.site { padding-left: 3px; }
td.site .icon { display: inline-block; vertical-align: top; margin: 1px 3px 0 0; }
tr.fill td { height: auto; }
tr.fill { height: 100%; }
th:last-child, td:last-child { border-right: 0; }
.views { display: flex; align-items: center; gap: 2px; height: 28px; padding-left: 6px; }
.views button { gap: 3px; height: 21px; padding: 0 6px 0 1px; border: 1px solid transparent; }
.views button + button { padding-left: 0; border-left: 0; }
.views .active { border-color: #3b97f2; background: #fff; }

.actions { width: 201px; border: 1px solid #8c8e90; background: linear-gradient(90deg, #fdfdfd, #ebebeb); }
.actions h2 { margin-bottom: 5px; }
.group-links {
  display: grid;
  grid-template-columns: 24px 1fr;
  margin: 0 3px;
  padding: 0 0 1px 2px;
  border-bottom: 1px solid;
  border-image: linear-gradient(90deg, #ddd, #808080 20%) 1;
}
.group-links + .group-links { padding-top: 3px; }
.group-links:last-child { border: 0; }
.group-links .icon { margin-top: 1px; }
.group-links a { grid-column: 2; color: #3d94d3; text-decoration: none; }

.status { display: flex; flex: none; height: 21px; margin-top: 1px; border: 1px solid #fff; background: #f0eceb; }
.status span { border-right: 1px solid #d0cdcc; }
.s-main { flex: 1; }
.s-mid { width: 133px; }
.s-end { width: 85px; }
.watermark {
  position: absolute;
  right: 7px;
  bottom: 8px;
  color: rgba(255, 255, 255, .75);
  text-shadow: 1px 1px 1px #bbb;
  font: 16px/20px "Liberation Sans", sans-serif;
}
```
